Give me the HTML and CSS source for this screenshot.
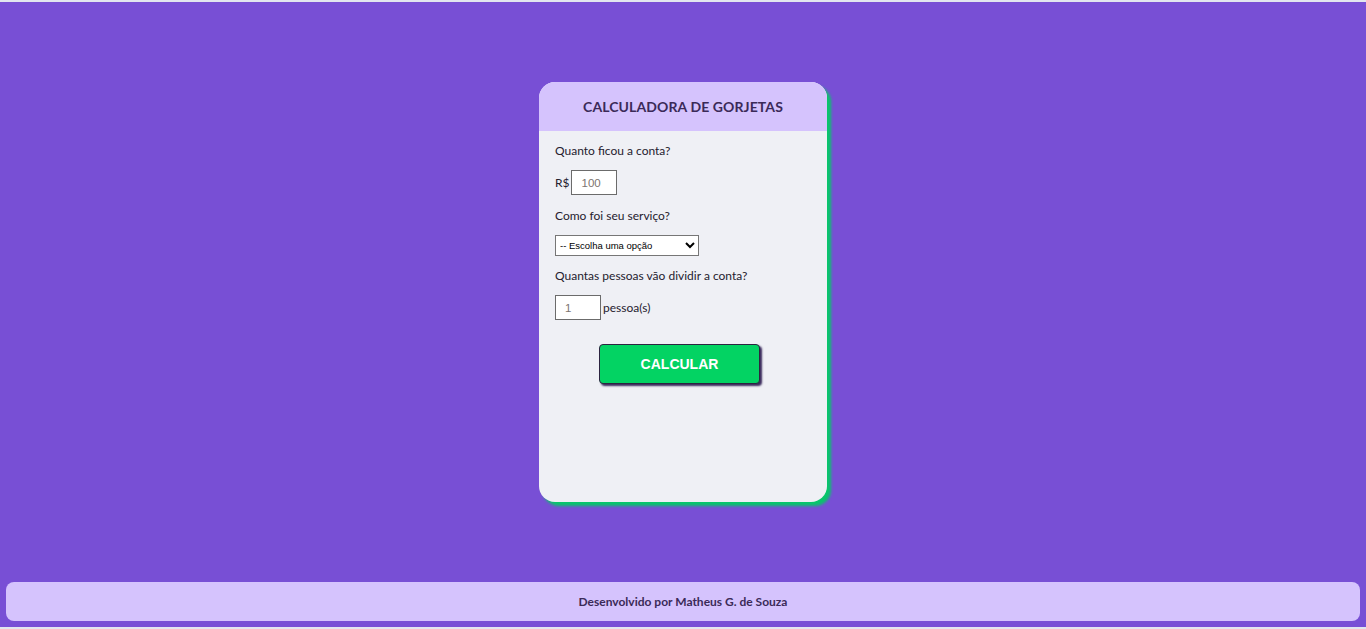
FILE: index.html
```html
<!DOCTYPE html>
<html lang="pt-BR">
<head>
<meta charset="utf-8">
<title>Calculadora de Gorjetas</title>
<link rel="stylesheet" href="styles.css">
</head>
<body>
<div class="page">
  <main class="main">
    <section class="card">
      <header class="card-head">
        <h1>CALCULADORA DE GORJETAS</h1>
      </header>
      <div class="card-body">
        <p class="q">Quanto ficou a conta?</p>
        <div class="row"><span>R$</span><input class="num" type="text" placeholder="100"></div>
        <p class="q">Como foi seu serviço?</p>
        <div class="row row-sel">
          <select class="sel">
            <option>-- Escolha uma opção</option>
          </select>
        </div>
        <p class="q">Quantas pessoas vão dividir a conta?</p>
        <div class="row row-last"><input class="num" type="text" placeholder="1"><span>pessoa(s)</span></div>
        <div class="btn-wrap"><button class="btn">CALCULAR</button></div>
      </div>
    </section>
  </main>
  <footer class="footer">Desenvolvido por Matheus G. de Souza</footer>
</div>
</body>
</html>
```
FILE: styles.css
```css
* { box-sizing: border-box; }
html, body { margin: 0; padding: 0; }
body {
  background: #e2e6ef;
  font-family: Lato, "Liberation Sans", sans-serif;
  padding-top: 2px;
}
.page {
  background: #784fd5;
  height: 625px;
  display: flex;
  flex-direction: column;
  padding: 0 6px 6px;
}
.main {
  flex: 1;
  display: flex;
  justify-content: center;
  padding-top: 80px;
}
.card {
  width: 288px;
  height: 420px;
  border-radius: 16px;
  background: #eff0f5;
  box-shadow: 4px 4px 3px #08c56b;
  overflow: hidden;
  align-self: flex-start;
}
.card-head {
  background: #d5c3fd;
  height: 49px;
  display: flex;
  align-items: center;
  justify-content: center;
  padding-bottom: 1px;
}
.card-head h1 {
  margin: 0;
  font-size: 14px;
  font-weight: 700;
  color: #3b2a58;
  letter-spacing: 0.1px;
}
.card-body {
  padding: 12px 16px;
  color: #25202e;
  font-size: 12px;
}
.q { margin: 0 0 11px; line-height: 16px; }
.row {
  display: flex;
  align-items: center;
  gap: 2px;
  margin-bottom: 13px;
}
.row-sel { margin-bottom: 12px; }
.row-last { margin-bottom: 24px; }
.num {
  width: 46px;
  height: 25px;
  border: 1px solid #6b6b6b;
  background: #fff;
  font-family: "Liberation Sans", Arial, sans-serif;
  font-size: 11.5px;
  padding: 0 9px;
}
.num::placeholder { color: #7d7470; }
.sel {
  width: 144px;
  height: 21px;
  font-family: "Liberation Sans", Arial, sans-serif;
  font-size: 9.5px;
  border: 1px solid #767676;
  background: #fff;
  color: #000;
}
.btn-wrap {
  display: flex;
  justify-content: center;
  padding-right: 7px;
}
.btn {
  width: 161px;
  height: 40px;
  background: #03d363;
  border: 1px solid #2d2440;
  border-radius: 4px;
  box-shadow: 2px 2px 2px #3a2a5c;
  color: #fff;
  font-family: "Liberation Sans", Arial, sans-serif;
  font-weight: 700;
  font-size: 14px;
}
.footer {
  background: #d5c3fd;
  height: 39px;
  border-radius: 8px;
  display: flex;
  align-items: center;
  justify-content: center;
  font-size: 12px;
  font-weight: 700;
  color: #3b2a58;
}
```
